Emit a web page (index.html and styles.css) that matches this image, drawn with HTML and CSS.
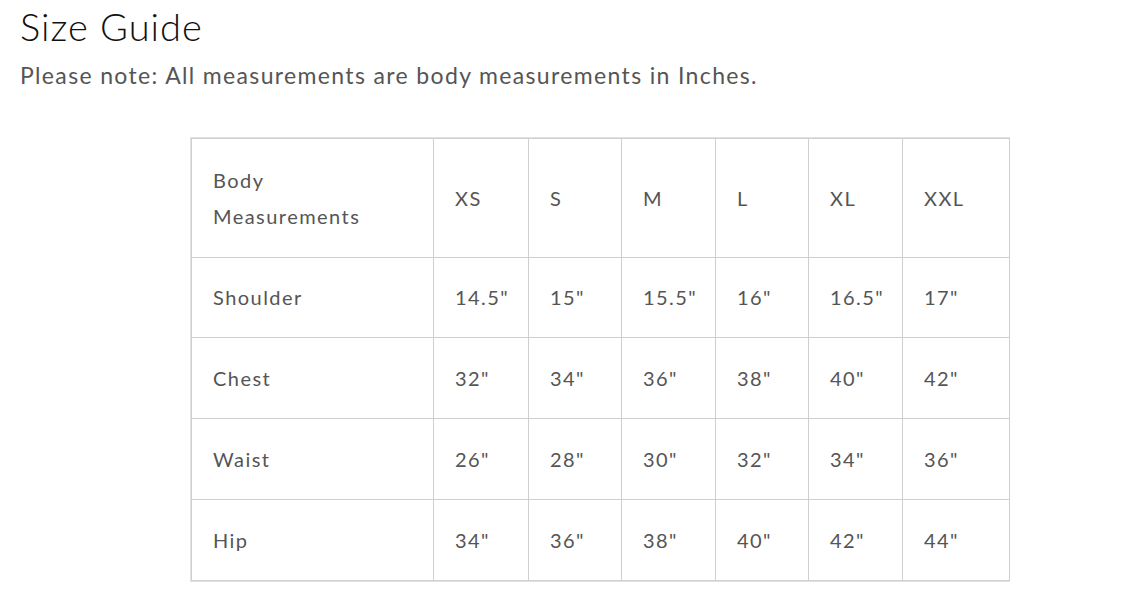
FILE: index.html
```html
<!DOCTYPE html>
<html>
<head>
<meta charset="utf-8">
<link rel="stylesheet" href="styles.css">
</head>
<body>
<div class="page">
  <h1 class="title">Size Guide</h1>
  <p class="note">Please note: All measurements are body measurements in Inches.</p>
  <div class="table-wrap">
    <table class="sizes">
      <colgroup>
        <col class="c-label"><col class="c-xs"><col class="c-s"><col class="c-m"><col class="c-l"><col class="c-xl"><col class="c-xxl">
      </colgroup>
      <tr class="head"><td>Body<br>Measurements</td><td>XS</td><td>S</td><td>M</td><td>L</td><td>XL</td><td>XXL</td></tr>
      <tr class="first"><td>Shoulder</td><td>14.5"</td><td>15"</td><td>15.5"</td><td>16"</td><td>16.5"</td><td>17"</td></tr>
      <tr><td>Chest</td><td>32"</td><td>34"</td><td>36"</td><td>38"</td><td>40"</td><td>42"</td></tr>
      <tr><td>Waist</td><td>26"</td><td>28"</td><td>30"</td><td>32"</td><td>34"</td><td>36"</td></tr>
      <tr><td>Hip</td><td>34"</td><td>36"</td><td>38"</td><td>40"</td><td>42"</td><td>44"</td></tr>
    </table>
  </div>
</div>
</body>
</html>
```
FILE: styles.css
```css
html, body { margin: 0; padding: 0; background: #fff; }
body { font-family: "Lato", "Liberation Sans", sans-serif; color: #555; }
.page { padding: 4px 20px 0 20px; }
.title {
  margin: 0;
  font-weight: 300;
  font-size: 38px;
  line-height: 44px;
  color: #111;
  letter-spacing: 1px;
}
.note {
  margin: 13px 0 0 0;
  font-size: 23px;
  line-height: 28px;
  letter-spacing: 1.35px;
  color: #555;
}
.table-wrap {
  margin: 48px 0 0 170px;
  width: 820px;
  border: 1px solid #e2e2e2;
  box-sizing: border-box;
}
.sizes {
  border-collapse: collapse;
  table-layout: fixed;
  width: 818px;
  font-size: 20px;
  color: #555;
  letter-spacing: 1.45px;
}
.sizes td {
  border: 1px solid #cfcfcf;
  padding: 22px 21px;
  line-height: 36px;
  vertical-align: middle;
  text-align: left;
}
.sizes tr.head td { padding-top: 23px; padding-bottom: 23px; }
.sizes tr.first td { padding-top: 21px; }
.c-label { width: 242px; }
.c-xs { width: 95px; }
.c-s { width: 93px; }
.c-m { width: 94px; }
.c-l { width: 93px; }
.c-xl { width: 94px; }
.c-xxl { width: 107px; }
```
